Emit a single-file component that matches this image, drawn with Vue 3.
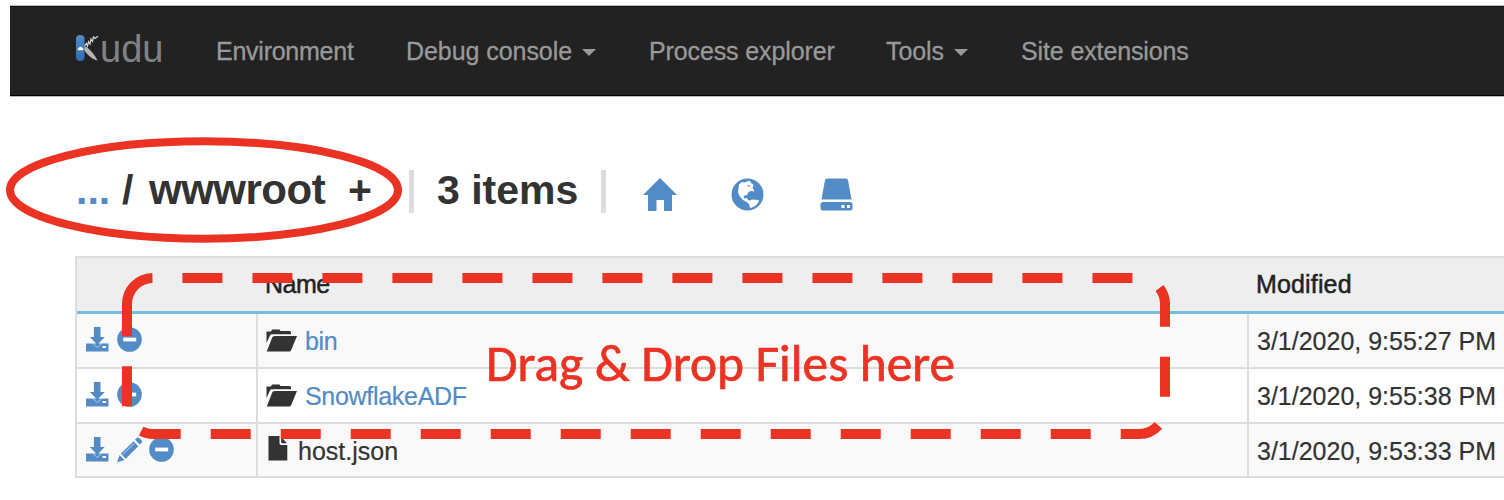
<script setup>
const navItems = [
  { label: 'Environment', key: 'env' },
  { label: 'Debug console', key: 'debug', caret: true },
  { label: 'Process explorer', key: 'process' },
  { label: 'Tools', key: 'tools', caret: true },
  { label: 'Site extensions', key: 'site' },
]
const rows = [
  { name: 'bin', folder: true, modified: '3/1/2020, 9:55:27 PM' },
  { name: 'SnowflakeADF', folder: true, modified: '3/1/2020, 9:55:38 PM' },
  { name: 'host.json', folder: false, modified: '3/1/2020, 9:53:33 PM' },
]
</script>

<template>
  <div class="page">
    <nav class="navbar">
      <a class="brand">
        <svg class="brand-mark" width="24" height="30" viewBox="0 0 24 30">
          <defs>
            <linearGradient id="knife" x1="0" y1="0" x2="0" y2="1">
              <stop offset="0" stop-color="#4f8cc9" />
              <stop offset="1" stop-color="#2f6cb3" />
            </linearGradient>
          </defs>
          <path d="M8 14.5 L10 13.5 C14 16.500 19 22 21.500 27.500 C17 27 11 21.500 8 17Z" fill="#b5b5b5" />
          <path d="M8 13.500 L10.500 10.500 L11.500 13 L12.500 8.500 L14 11 L15 6 L16.500 8.500 L17.500 3.800 L19 5.500 L22 3.200" fill="none" stroke="#d5d5d5" stroke-width="1.200" />
          <rect x="0" y="2" width="8.500" height="26" rx="4" fill="url(#knife)" />
          <path d="M2 17.200 a1.600 1.600 0 0 1 1-2.500 a1.800 1.800 0 0 1 3.200 0 a1.400 1.400 0 0 1 .6 2.500Z" fill="#fff" />
        </svg>
        <span class="brand-text">udu</span>
      </a>
      <a v-for="item in navItems" :key="item.key" class="nav-item" :class="item.key">
        {{ item.label }}<i v-if="item.caret" class="caret"></i>
      </a>
    </nav>

    <header class="path-bar">
      <span class="crumb up">...</span>
      <span class="crumb slash">/</span>
      <span class="crumb folder">wwwroot</span>
      <span class="crumb plus">+</span>
      <i class="divider"></i>
      <span class="crumb count">3 items</span>
      <i class="divider"></i>
      <svg class="tool home" width="34" height="34" viewBox="0 0 34 34">
        <path d="M17 0 L34 17 H29 V33 H21 V22 H13.500 V33 H5 V17 H0Z" fill="#528bc5" />
      </svg>
      <svg class="tool globe" width="33" height="33" viewBox="0 0 33 33">
        <circle cx="16.500" cy="16.500" r="16" fill="#528bc5" />
        <path d="M8 6.500 L11 4 L14 4.500 L17 3 L20 3.500 L19.500 5 L22 6 L22.500 8 L21.500 9.500 L23.500 13.500 L20 13 L17.500 14 L16 17 L13.500 17.500 L12.500 19 L13.500 20.500 L16 20 L17 22 L19 22.500 L21 21.500 L28 22 L27 25 L24 28 L20 30 L18.500 29 L18.500 27 L16.500 24.500 L12 22 L8.500 18 L7 14 L7.500 10Z" fill="#fff" />
        <path d="M16 7 L19.500 7.500 L17.500 9Z" fill="#528bc5" />
      </svg>
      <svg class="tool disk" width="33" height="33" viewBox="0 0 33 33">
        <path d="M7 .5 H26 Q27.500 .5 28 2 L31.500 21.500 H1.500 L5 2 Q5.500 .5 7 .5Z" fill="#528bc5" />
        <rect x=".5" y="24" width="32" height="8.500" rx="2.500" fill="#528bc5" />
        <path d="M21.500 27h3v3h-3z M27 27h3v3h-3z" fill="#fff" />
      </svg>
    </header>

    <section class="table">
      <div class="row head">
        <div class="cell"></div>
        <div class="cell name">Name</div>
        <div class="cell modified">Modified</div>
      </div>
      <div v-for="row in rows" :key="row.name" class="row body">
        <div class="cell actions">
          <svg width="23" height="25" viewBox="0 0 23 25">
            <path d="M0 16.500H22.500V24.500H0z" fill="#528bc5" />
            <path d="M7.900 0h6.600v10h4.200L11.300 17.800 3.900 10h4z" fill="#528bc5" />
            <path d="M6.500 16.200L11.300 20.500L16.100 16.200" fill="none" stroke="#f9f9f9" stroke-width=".6" />
            <path d="M16.500 19h3.500v2h-3.500z" fill="#fff" />
          </svg>
          <svg v-if="!row.folder" class="pencil" width="26" height="26" viewBox="0 0 26 26">
            <path d="M0 25.500 L2.500 18 L7.500 23Z M3.800 16.800 L16.500 4.300 L21.300 9.200 L8.700 21.800Z M18 2.800 L20 .8 Q21 0 22 .8 L24.800 3.600 Q25.600 4.500 24.800 5.500 L22.800 7.600Z" fill="#528bc5" />
            <path d="M5.500 17.800 L17 6.500" stroke="#f9f9f9" stroke-width=".7" />
          </svg>
          <svg class="minus" width="25" height="25" viewBox="0 0 25 25">
            <circle cx="12.500" cy="12.500" r="12.300" fill="#528bc5" />
            <rect x="6.200" y="10.600" width="13" height="3.800" fill="#fff" />
          </svg>
        </div>
        <div class="cell name">
          <svg v-if="row.folder" class="folder-icon" width="32" height="23" viewBox="0 0 32 23">
            <path d="M.5 14 V2.500 H5 L6 .5 H13.500 L14.500 2 H23.500 Q25 2 25 3.500 V5.200 H6 Q4.500 5.200 4 6.500Z M8.500 7 H31 L25.200 21 Q24.700 22.500 23 22.500 H.8 L6.200 8.500 Q6.800 7 8.500 7Z" fill="#333" />
          </svg>
          <svg v-else class="file-icon" width="20" height="25" viewBox="0 0 20 25">
            <path d="M.5 0 H11.500 V7 Q11.500 9 13.500 9 H19.300 V24.500 H.5Z M13.200 1 L19 7.300 H14.200 Q13.200 7.300 13.200 6.300Z" fill="#333" />
          </svg>
          <span :class="{ link: row.folder }">{{ row.name }}</span>
        </div>
        <div class="cell modified">{{ row.modified }}</div>
      </div>
    </section>

    <svg class="marks" width="1504" height="500" viewBox="0 0 1504 500">
      <g fill="none" stroke="#eb3323">
        <ellipse cx="204" cy="190" rx="194" ry="48.700" stroke-width="8" />
        <path d="M127 304 A26 26 0 0 1 153 278 H1139 A26 26 0 0 1 1165 304 V408 A26 26 0 0 1 1139 434 H153 A26 26 0 0 1 127 408 Z" stroke-width="10" stroke-dasharray="40 30" />
      </g>
    </svg>
    <div class="drop-hint">Drag &amp; Drop Files here</div>
  </div>
</template>

<style>
body {
  background: #fff;
  overflow: hidden;
}
</style>

<style scoped>
.page {
  position: relative;
  width: 1504px;
  height: 500px;
  overflow: hidden;
  background: #fff;
  font-family: "Liberation Sans", Arial, sans-serif;
  font-size: 25px;
  color: #333;
}
.navbar {
  display: flex;
  box-sizing: border-box;
  height: 92px;
  margin: 5px 0 0 10px;
  border-top: 1px solid #b9bec3;
  border-bottom: 1px solid #bbb;
  background: #222;
  box-shadow: inset 0 -1px #000, inset 0 1px #111;
  color: #999;
  line-height: 90px;
  white-space: nowrap;
}
.brand {
  display: flex;
  width: 140px;
  padding-left: 66px;
}
.brand-mark {
  margin-top: 27px;
}
.brand-text {
  color: #808285;
  font-size: 38px;
  line-height: 86px;
}
.nav-item {
  flex: none;
  letter-spacing: -.12px;
  -webkit-text-stroke: .3px #999;
}
.env { width: 190px; letter-spacing: -.25px; }
.debug { width: 243px; letter-spacing: -.06px; }
.process { width: 237px; }
.tools { width: 135px; }
.caret {
  display: inline-block;
  margin-left: 10px;
  vertical-align: 4px;
  border: 7px solid transparent;
  border-top-color: #999;
  border-bottom: 0;
}
.path-bar {
  display: flex;
  height: 159px;
  padding-left: 75px;
  font-size: 41px;
  font-weight: bold;
  white-space: nowrap;
}
.crumb {
  flex: none;
  box-sizing: border-box;
  margin-top: 70px;
  line-height: 46px;
}
.up { width: 46px; padding-left: 1px; color: #528bc5; }
.slash { width: 27px; padding-left: 1px; }
.folder { width: 198px; font-size: 42px; letter-spacing: -.5px; padding-left: 1px; }
.plus { width: 63px; padding-left: 2px; }
.count { width: 165px; padding-left: 1px; }
.divider {
  flex: none;
  width: 5px;
  height: 43px;
  margin: 73px 22px 0 0;
  background: #ddd;
}
.divider + .tool { margin-left: 15px; }
.tool {
  flex: none;
  margin-top: 81px;
}
.globe { margin: 81px 0 0 54px; }
.disk { margin: 81px 0 0 56px; }
.table {
  margin-left: 75px;
  border-top: 2px solid #ddd;
  border-left: 2px solid #ddd;
}
.row {
  display: grid;
  grid-template-columns: 179px 991px 1fr;
  height: 53px;
  line-height: 53px;
  border-bottom: 2px solid #ddd;
  white-space: nowrap;
}
.row:nth-child(even) { background: #f9f9f9; }
.row:nth-child(4) { height: 52px; }
.head {
  background: #eee;
  border-bottom: 3px solid #75bedb;
  color: #222;
  -webkit-text-stroke: .5px #222;
}
.cell {
  display: flex;
}
.body .cell + .cell { border-left: 2px solid #ddd; }
.body .modified { padding-left: 8px; }
.body .name { padding-left: 8px; }
.head .name { padding-left: 9px; letter-spacing: -.5px; }
.head .modified { padding-left: 9px; letter-spacing: .15px; }
.actions {
  padding: 13px 0 0 9px;
}
.minus { margin-left: 8px; }
.pencil { margin-left: 8px; }
.pencil + .minus { margin-left: 6px; }
.folder-icon {
  margin: 15px 7px 0 0;
}
.file-icon {
  margin: 12px 10px 0 2px;
}
.body span,
.body .modified { padding-top: 1px; }
.link { color: #528bc5; letter-spacing: -.3px; }
.body { -webkit-text-stroke: .2px; }
.marks {
  position: absolute;
  inset: 0;
}
.drop-hint {
  position: absolute;
  left: 486px;
  top: 336px;
  color: #eb3323;
  font-family: Carlito, Lato, sans-serif;
  font-size: 51.300px;
  line-height: 56px;
  white-space: nowrap;
  -webkit-text-stroke: .7px #eb3323;
}
</style>
